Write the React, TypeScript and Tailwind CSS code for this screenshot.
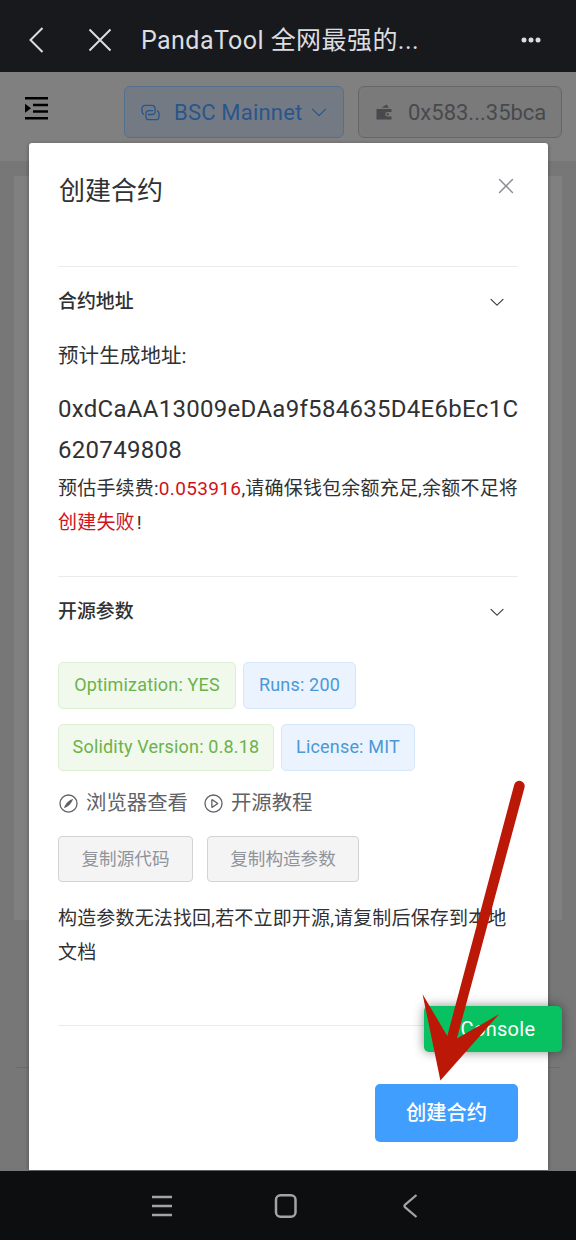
import type { ReactNode } from "react";

const PATHS = {
  link: "M640 384v64H448a128 128 0 0 0-128 128v128a128 128 0 0 0 128 128h320a128 128 0 0 0 128-128V576a128 128 0 0 0-64-110.848V394.88c74.56 26.368 128 97.472 128 181.056v128a192 192 0 0 1-192 192H448a192 192 0 0 1-192-192V576a192 192 0 0 1 192-192zM384 640v-64h192a128 128 0 0 0 128-128V320a128 128 0 0 0-128-128H256a128 128 0 0 0-128 128v128a128 128 0 0 0 64 110.848v70.272A192.064 192.064 0 0 1 64 448V320a192 192 0 0 1 192-192h320a192 192 0 0 1 192 192v128a192 192 0 0 1-192 192z",
  wallet:
    "M688 512a112 112 0 1 0 0 224h208v160H128V352h768v160zm32 160h-32a48 48 0 0 1 0-96h32a48 48 0 0 1 0 96m-80-544 128 160H384z",
  down: "M831.872 340.864 512 652.672 192.128 340.864a30.592 30.592 0 0 0-42.752 0 29.12 29.12 0 0 0 0 41.6L489.664 714.24a32 32 0 0 0 44.672 0l340.288-331.712a29.12 29.12 0 0 0 0-41.728 30.592 30.592 0 0 0-42.752 0z",
  close:
    "M764.288 214.592 512 466.88 259.712 214.592a31.936 31.936 0 0 0-45.12 45.12L466.752 512 214.528 764.224a31.936 31.936 0 1 0 45.12 45.184L512 557.184l252.288 252.288a31.936 31.936 0 0 0 45.12-45.12L557.12 512.064l252.288-252.352a31.936 31.936 0 1 0-45.12-45.184z",
  play: "M512 64a448 448 0 1 1 0 896 448 448 0 0 1 0-896m0 832a384 384 0 0 0 0-768 384 384 0 0 0 0 768m-48-247.616L668.608 512 464 375.616zm10.624-342.656 249.472 166.336a48 48 0 0 1 0 79.872L474.624 718.272A48 48 0 0 1 400 678.336V345.6a48 48 0 0 1 74.624-39.936z",
  compass:
    "M512 896a384 384 0 1 0 0-768 384 384 0 0 0 0 768m0 64a448 448 0 1 1 0-896 448 448 0 0 1 0 896M725.888 315.008C676.48 428.672 624 513.28 568.576 568.64c-55.424 55.424-139.968 107.904-253.568 157.312a12.8 12.8 0 0 1-16.896-16.832c49.536-113.728 102.016-198.272 157.312-253.632 55.36-55.296 139.904-107.776 253.632-157.312a12.8 12.8 0 0 1 16.832 16.832",
};

function Icon({ name, className }: { name: keyof typeof PATHS; className: string }) {
  return (
    <svg viewBox="0 0 1024 1024" fill="currentColor" className={"shrink-0 " + className}>
      <path d={PATHS[name]} />
    </svg>
  );
}

function TitleBar() {
  return (
    <header className="flex h-[72px] shrink-0 items-center bg-[#18191d] pt-[7px] text-[#dcdde0]">
      <svg className="ml-[27px] h-7 w-5 shrink-0" viewBox="0 0 20 28" fill="none" stroke="currentColor" strokeWidth="2">
        <path d="M15.500 2 3.500 14l12 12" />
      </svg>
      <svg className="ml-[41px] h-6 w-6 shrink-0" viewBox="0 0 24 24" fill="none" stroke="currentColor" strokeWidth="2">
        <path d="M1.500 1.500l21 21M22.500 1.500l-21 21" />
      </svg>
      <h1 className="ml-[29px] pt-[2px] whitespace-nowrap text-[25px] leading-9 tracking-[0.440px]">PandaTool 全网最强的...</h1>
      <svg className="mr-[35px] ml-auto h-2 w-5 shrink-0" viewBox="0 0 20 8" fill="currentColor">
        <circle cx="3" cy="4" r="2.500" />
        <circle cx="10" cy="4" r="2.500" />
        <circle cx="17" cy="4" r="2.500" />
      </svg>
    </header>
  );
}

function Page() {
  return (
    <div className="flex h-full flex-col bg-[#777777]">
      <div className="flex h-[89px] shrink-0 items-start bg-[#808080] pt-[14px] pr-[14px] pl-[25px]">
        <svg className="mt-[11px] h-[23px] w-[23px]" viewBox="0 0 23 23" fill="#000">
          <path d="M0 0h23v2.500H0zM8 6.700h15v2.500H8zM8 13.300h15v2.500H8zM0 20h23v2.500H0zM0 6.800l6 4.500-6 4.500z" />
        </svg>
        <div className="ml-auto flex h-[52px] w-[220px] items-center rounded-md border border-[#53708e] bg-[#747a84] pl-[15px] text-[#28568c]">
          <Icon name="link" className="h-[21px] w-[21px]" />
          <span className="ml-[13px] whitespace-nowrap text-[22px] tracking-[0.200px]">BSC Mainnet</span>
          <Icon name="down" className="ml-[7px] h-5 w-5" />
        </div>
        <div className="ml-[14px] flex h-[52px] w-[204px] items-center rounded-md border border-[#666668] bg-[#7a7a7b] pl-[15px] text-[#48494d]">
          <Icon name="wallet" className="h-5 w-5" />
          <span className="ml-[14px] whitespace-nowrap text-[22px] tracking-[0px]">0x583...35bca</span>
        </div>
      </div>
      <div className="mx-[14px] mt-[15px] h-[744px] shrink-0 bg-[#808080]" />
      <div className="mx-4 mt-[147px] h-px shrink-0 bg-[#6c6c6c]" />
    </div>
  );
}

function SectionTitle({ children }: { children: ReactNode }) {
  return (
    <div className="flex h-[70px] items-center justify-between border-t border-[#e8eaee] pr-3 text-[#303133]">
      <h2 className="pt-[2px] text-[18.900px] font-medium">{children}</h2>
      <Icon name="down" className="h-[18px] w-[18px]" />
    </div>
  );
}

function Tag({ className, children }: { className: string; children: ReactNode }) {
  return (
    <span className={"flex h-[47px] items-center justify-center rounded-[5px] border pb-[2px] whitespace-nowrap text-[18px] tracking-[0.180px] " + className}>
      {children}
    </span>
  );
}

const GREEN = "border-[#dcefd4] bg-[#f0f9eb] text-[#6db24b]";
const BLUE = "border-[#d5e7f9] bg-[#eaf3fe] text-[#4c98d6]";

function Dialog() {
  return (
    <section className="flex h-[1027px] w-[519px] flex-col rounded-t-[3px] bg-white pr-[30px] pl-[29px] text-[#303133] shadow-[0_1px_4px_rgba(0,0,0,0.35)]">
      <div className="flex h-[123px] shrink-0 justify-between">
        <h1 className="mt-7 ml-px text-[26px] leading-10">创建合约</h1>
        <Icon name="close" className="mt-[31px] h-6 w-6 text-[#8b8d91]" />
      </div>

      <div className="h-[310px] shrink-0">
        <SectionTitle>合约地址</SectionTitle>
        <p className="mt-[3px] text-[20.500px] leading-[34px] tracking-[0.100px]">预计生成地址:</p>
        <p className="mt-4 whitespace-nowrap text-[24px] leading-[41px]">
          <span className="block tracking-[0.290px]">0xdCaAA13009eDAa9f584635D4E6bEc1C</span>
          <span className="block tracking-[0.300px]">620749808</span>
        </p>
        <p className="relative top-px whitespace-nowrap text-[19px] leading-[34px] tracking-[0.200px]">
          <span className="block">
            预估手续费:<span className="tracking-[0.350px] text-[#d0121b]">0.053916</span>,请确保钱包余额充足,余额不足将
          </span>
          <span className="block">
            <span className="text-[#d0121b]">创建失败</span>
            <span className="ml-[2px]">!</span>
          </span>
        </p>
      </div>

      <div className="h-[449px] shrink-0">
        <SectionTitle>开源参数</SectionTitle>
        <div className="mt-4 flex gap-[7px]">
          <Tag className={"w-[178px] " + GREEN}>Optimization: YES</Tag>
          <Tag className={"w-[113px] " + BLUE}>Runs: 200</Tag>
        </div>
        <div className="mt-[15px] flex gap-[7px]">
          <Tag className={"w-[216px] " + GREEN}>Solidity Version: 0.8.18</Tag>
          <Tag className={"w-[134px] " + BLUE}>License: MIT</Tag>
        </div>
        <div className="mt-[15px] flex h-[34px] items-center text-[20.400px] text-[#606266]">
          <Icon name="compass" className="h-[21px] w-[21px]" />
          <span className="ml-[7px]">浏览器查看</span>
          <Icon name="play" className="ml-[15px] h-[21px] w-[21px]" />
          <span className="ml-[7px]">开源教程</span>
        </div>
        <div className="mt-4 flex gap-[14px] text-[17.600px] text-[#909399]">
          <button className="h-[46px] w-[135px] rounded border border-[#d2d3d6] bg-[#f4f4f5]">复制源代码</button>
          <button className="h-[46px] w-[152px] rounded border border-[#d2d3d6] bg-[#f4f4f5]">复制构造参数</button>
        </div>
        <p className="mt-5 whitespace-nowrap text-[19px] leading-[34px] tracking-[0.160px]">
          <span className="block">构造参数无法找回,若不立即开源,请复制后保存到本地</span>
          <span className="block">文档</span>
        </p>
      </div>

      <div className="flex justify-end border-t border-[#e8eaee] pt-[58px]">
        <button className="h-[58px] w-[143px] rounded-[5px] bg-[#409eff] text-[20.300px] font-medium text-white">创建合约</button>
      </div>
    </section>
  );
}

function NavBar() {
  return (
    <footer className="flex h-[69px] shrink-0 items-center bg-[#0d0e10] text-[#a4a4a6]">
      <svg className="ml-[151px] h-[22px] w-[22px]" viewBox="0 0 22 22" stroke="currentColor" strokeWidth="2.500">
        <path d="M1 2h20M1 11h20M1 20h20" />
      </svg>
      <svg className="ml-[101px] h-6 w-6" viewBox="0 0 24 24" fill="none" stroke="currentColor" strokeWidth="2.500">
        <rect x="2" y="1.300" width="19.500" height="21.400" rx="4.500" />
      </svg>
      <svg className="ml-[104px] h-6 w-4" viewBox="0 0 16 24" fill="none" stroke="currentColor" strokeWidth="2.300">
        <path d="M14.500 1 3.200 10.700Q1.700 12 3.200 13.300L14.500 23" />
      </svg>
    </footer>
  );
}

export default function App() {
  return (
    <div className="relative flex h-[1240px] w-[576px] flex-col overflow-hidden font-[Roboto,'Noto_Sans_CJK_SC',sans-serif]">
      <TitleBar />
      <main className="relative h-[1099px] shrink-0 overflow-hidden">
        <Page />
        <div className="absolute inset-0 pt-[71px] pl-[29px]">
          <Dialog />
        </div>
        <button className="absolute right-[14px] bottom-[119px] h-[46px] w-[138px] rounded-[5px] bg-[#08c160] pl-[10px] text-[20px] tracking-[0.300px] text-white shadow-[0_0_11px_rgba(0,0,0,0.45)]">
          Console
        </button>
      </main>
      <NavBar />
      <svg className="pointer-events-none absolute top-[770px] left-[410px]" width="130" height="320" viewBox="410 770 130 320" fill="#bc1808">
        <path d="M514.200 784.700a5.300 5.300 0 0 1 10.300 2.800L456.900 1038.500 499 1014.300 440.400 1080.500 422.600 994.300 447.300 1036z" />
      </svg>
    </div>
  );
}
